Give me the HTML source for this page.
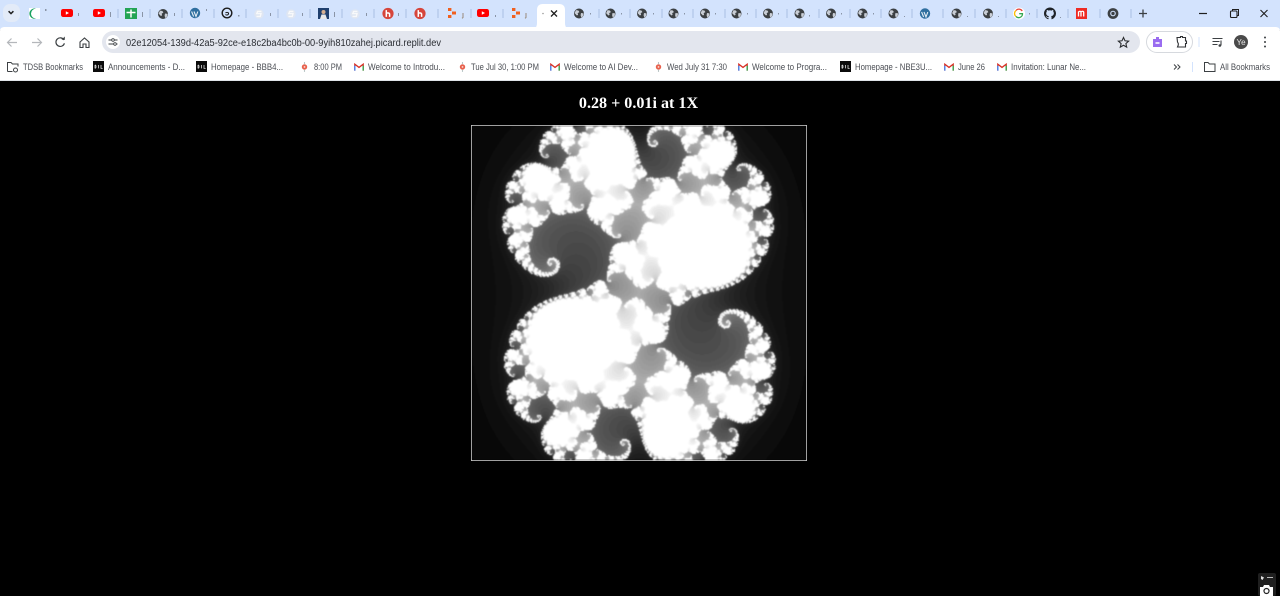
<!DOCTYPE html>
<html lang="en">
<head>
<meta charset="utf-8">
<title>0.28 + 0.01i at 1X</title>
<style>
html,body{margin:0;padding:0;background:#000;width:1280px;height:596px;overflow:hidden}
#chrome{position:absolute;left:0;top:0;filter:blur(.35px)}
#title{position:absolute;left:438.5px;width:400px;top:93px;margin:0;text-align:center;color:#fff;font:bold 16.1px/22px "Liberation Serif",serif}
#box{position:absolute;left:471px;top:125px;width:334px;height:334px;border:1px solid #c8c8c8}
canvas{display:block;width:334px;height:334px;filter:blur(.4px)}
#cam{position:absolute;left:0;top:0}
text{font-family:"Liberation Sans",sans-serif}
</style>
</head>
<body>
<svg id="chrome" width="1280" height="81" viewBox="0 0 1280 81" xmlns="http://www.w3.org/2000/svg">
<defs>
<symbol id="globe" viewBox="0 0 12 12"><circle cx="6" cy="6" r="5" fill="#3c4043"/><path d="M3 2.600l2.400.4 1 1.600-1.700 1 .4 1.800-1.200.6L1.600 5.600zM8 5.500l2.600.4-.5 2.600-1.800 1.600-.7-2.400z" fill="#c9ced6"/></symbol>
<symbol id="yt" viewBox="0 0 12 12"><rect x="0" y="2" width="12" height="8" rx="2.200" fill="#f00"/><path d="M4.800 4.200L8 6 4.800 7.800z" fill="#fff"/></symbol>
<symbol id="wp" viewBox="0 0 12 12"><circle cx="6" cy="6" r="5.200" fill="#2f6f9f"/><path d="M2.600 4.500l2 5M5 4.500l2 5 1.800-5" fill="none" stroke="#e6eef5" stroke-width="1.100"/></symbol>
<symbol id="s" viewBox="0 0 12 12"><circle cx="6" cy="6" r="4.800" fill="#dfe6f2"/><path d="M8.400 3.400H4.600L3.800 5.600H8L7.300 8.400H3.500" fill="none" stroke="#f8f9fa" stroke-width="1.400"/></symbol>
<symbol id="h" viewBox="0 0 12 12"><circle cx="6" cy="6" r="5.600" fill="#d6453b"/><path d="M4.300 2.600v6.800M4.300 6.200c1-1.200 3.300-1 3.300.6v2.600" fill="none" stroke="#fff" stroke-width="1.500"/></symbol>
<symbol id="rp" viewBox="0 0 12 12"><path d="M2 1h3.400v3H2zM6 4.500h4v3H6zM2 8h3.400v3H2z" fill="#f0601f"/></symbol>
<symbol id="d2l" viewBox="0 0 11 11"><rect width="11" height="11" fill="#0b0b0b"/><path d="M2 4v3.400M2 4c1.400 0 1.400 3.400 0 3.400M5.500 4v3.400M8 4v3.400h1.600" fill="none" stroke="#ddd" stroke-width=".8"/></symbol>
<symbol id="gm" viewBox="0 0 11 9"><path d="M.8 8.600V1.400l4.700 3.600 4.700-3.600v7.200" fill="none" stroke="#d93025" stroke-width="1.500"/><path d="M.8 8.600V3" stroke="#4285f4" stroke-width="1.500"/><path d="M10.200 8.600V3" stroke="#34a853" stroke-width="1.500"/></symbol>
<symbol id="cal" viewBox="0 0 10 12"><circle cx="5" cy="6.500" r="3" fill="#e8604c"/><path d="M5 1v2.500M5 9.500V12" stroke="#b8c4c4" stroke-width="1.200"/><circle cx="5" cy="6.500" r="1" fill="#f7d7cf"/></symbol>
<symbol id="gh" viewBox="0 0 16 16"><path fill="#1f2328" d="M8 0C3.580 0 0 3.580 0 8c0 3.540 2.290 6.530 5.470 7.590.4.070.55-.17.55-.38 0-.19-.01-.82-.01-1.490-2.010.37-2.530-.49-2.690-.94-.09-.23-.48-.94-.82-1.130-.28-.15-.68-.52-.01-.53.63-.01 1.080.58 1.230.82.72 1.210 1.870.87 2.330.66.070-.52.28-.87.51-1.070-1.780-.2-3.640-.89-3.640-3.950 0-.87.31-1.590.82-2.150-.08-.2-.36-1.020.08-2.120 0 0 .67-.21 2.200.82.64-.18 1.320-.27 2-.27.68 0 1.360.09 2 .27 1.530-1.040 2.200-.82 2.200-.82.44 1.100.16 1.920.08 2.120.51.56.82 1.270.82 2.150 0 3.070-1.870 3.750-3.650 3.950.29.25.54.73.54 1.480 0 1.070-.01 1.930-.01 2.200 0 .21.15.46.55.38A8.013 8.013 0 0016 8c0-4.420-3.580-8-8-8z"/></symbol>
</defs>

<!-- tab strip -->
<rect width="1280" height="30" fill="#d3e3fd"/>
<rect x="3" y="4" width="17" height="18" rx="7" fill="#e3ebf8"/>
<path d="M8.600 11.200l2.400 2.400 2.400-2.400" fill="none" stroke="#1f1f1f" stroke-width="1.500"/>

<rect x="29" y="8" width="11" height="11" fill="#fff"/>
<path d="M36 8.600a5.200 5.200 0 1 0 0 10 4.200 4.200 0 1 1 0-10z" fill="#1aa260"/>
<use href="#yt" x="61" y="7" width="12" height="12"/>
<use href="#yt" x="93" y="7" width="12" height="12"/>
<rect x="125" y="8" width="12" height="11" fill="#23a455"/><path d="M126.500 12.500h9M131 9.500v8" stroke="#fff" stroke-width="1.500"/>
<use href="#globe" x="157" y="8" width="12" height="12"/>
<use href="#wp" x="189" y="7" width="12" height="12"/>
<circle cx="227" cy="13" r="4.800" fill="none" stroke="#1c1c1c" stroke-width="1.400"/><path d="M225.500 13a2 2 0 0 1 3 0c.4 2-2 2.600-3 1.400" fill="none" stroke="#1c1c1c"/>
<use href="#s" x="253" y="8" width="12" height="12"/>
<use href="#s" x="285" y="8" width="12" height="12"/>
<rect x="318" y="8" width="11" height="11" fill="#20406e"/><circle cx="323.500" cy="12" r="2" fill="#d8b090"/><path d="M320 19l1.500-4.500h4L327 19z" fill="#e8e8e8"/>
<use href="#s" x="349" y="8" width="12" height="12"/>
<use href="#h" x="382" y="7.500" width="12" height="12"/>
<use href="#h" x="414" y="7.500" width="12" height="12"/>
<use href="#rp" x="446" y="7" width="12" height="12"/>
<use href="#yt" x="477" y="7" width="12" height="12"/>
<use href="#rp" x="510" y="7" width="12" height="12"/>
<!-- active tab -->
<path d="M530 30c5 0 7-3 7-7V10c0-4 2-6 6-6h16c4 0 6 2 6 6v13c0 4 2 7 7 7z" fill="#fff"/>
<path d="M551 10.500l6 6M557 10.500l-6 6" stroke="#1f1f1f" stroke-width="1.300"/>
<circle cx="543" cy="13.500" r=".8" fill="#999"/>
<!-- globes -->
<use href="#globe" x="573" y="7.500" width="12" height="12"/>
<use href="#globe" x="604.500" y="7.500" width="12" height="12"/>
<use href="#globe" x="636" y="7.500" width="12" height="12"/>
<use href="#globe" x="667.500" y="7.500" width="12" height="12"/>
<use href="#globe" x="699" y="7.500" width="12" height="12"/>
<use href="#globe" x="730.500" y="7.500" width="12" height="12"/>
<use href="#globe" x="762" y="7.500" width="12" height="12"/>
<use href="#globe" x="793.500" y="7.500" width="12" height="12"/>
<use href="#globe" x="825" y="7.500" width="12" height="12"/>
<use href="#globe" x="856.500" y="7.500" width="12" height="12"/>
<use href="#globe" x="887.500" y="7.500" width="12" height="12"/>
<use href="#wp" x="919" y="7.500" width="12" height="12"/>
<use href="#globe" x="950.500" y="7.500" width="12" height="12"/>
<use href="#globe" x="982" y="7.500" width="12" height="12"/>
<circle cx="1019" cy="13.500" r="6" fill="#fff"/>
<path d="M1022.200 11a3.800 3.800 0 0 0-6.200-.5" fill="none" stroke="#ea4335" stroke-width="1.300"/><path d="M1016 10.500a3.800 3.800 0 0 0 0 6" fill="none" stroke="#fbbc05" stroke-width="1.300"/><path d="M1016 16.500a3.800 3.800 0 0 0 6.500-2.800h-3.300" fill="none" stroke="#34a853" stroke-width="1.300"/>
<use href="#gh" x="1044" y="7.500" width="12" height="12"/>
<rect x="1076" y="8" width="11" height="11" fill="#ee2b24"/><path d="M1078.500 16.500v-5M1078.500 12c1-1 2.300-1 2.500 0v4.500M1081 12c1-1 2.500-1 2.700 0v4.500" fill="none" stroke="#fff" stroke-width="1.300"/>
<circle cx="1113" cy="13.500" r="5.400" fill="#3c4043"/><circle cx="1113" cy="13.500" r="2.800" fill="#d3e3fd"/><circle cx="1113" cy="13.500" r="1.700" fill="#3c4043"/>
<!-- separators -->
<g stroke="#a9bfe2" stroke-width="1">
<path d="M118 9v9M150 9v9M182 9v9M214 9v9M246 9v9M278 9v9M310 9v9M342 9v9M374 9v9M406 9v9M438 9v9M471 9v9M503 9v9M599 9v9M630 9v9M662 9v9M693 9v9M725 9v9M756 9v9M787 9v9M819 9v9M850 9v9M881 9v9M912 9v9M943 9v9M975 9v9M1006 9v9M1037 9v9M1068 9v9M1100 9v9M1131 9v9"/>
</g>
<g fill="#8a94a6">
<rect x="45" y="9" width="1.500" height="2"/><rect x="78" y="13" width="1" height="3"/><rect x="110" y="12" width="1" height="5"/><rect x="142" y="12" width="1" height="5"/><rect x="174" y="13" width="1" height="3"/><rect x="206" y="9" width="1" height="2"/><rect x="238" y="15" width="1.500" height="1.500"/><rect x="270" y="13" width="1" height="3"/><rect x="302" y="13" width="1" height="3"/><rect x="334" y="12" width="1" height="5"/><rect x="366" y="13" width="1" height="3"/><rect x="398" y="13" width="1" height="3"/><rect x="495" y="15" width="1" height="2"/><rect x="590" y="13" width="1" height="1.500"/><rect x="621" y="13" width="1" height="1.500"/><rect x="653" y="13" width="1" height="1.500"/><rect x="684" y="13" width="1" height="1.500"/><rect x="715" y="13" width="1" height="1.500"/><rect x="747" y="13" width="1" height="1.500"/><rect x="778" y="13" width="1" height="1.500"/><rect x="809" y="15" width="1" height="1.500"/><rect x="841" y="13" width="1" height="1.500"/><rect x="873" y="13" width="1" height="1.500"/><rect x="904" y="16" width="1" height="1"/><rect x="967" y="16" width="1" height="1"/><rect x="998" y="16" width="1" height="1"/><rect x="1029" y="13" width="1" height="1.500"/><rect x="1060" y="17" width="1" height="1"/>
</g>
<path d="M526 13v4.500l-1 .8" stroke="#9a8a7a" fill="none"/>
<path d="M463 13v4.500l-1 .8" stroke="#9a8a7a" fill="none"/>
<!-- new tab + window controls -->
<path d="M1139 13.500h8M1143 9.500v8" stroke="#3c4043" stroke-width="1.300"/>
<path d="M1199 13.500h8" stroke="#1f1f1f" stroke-width="1.200"/>
<rect x="1230.500" y="11" width="6.500" height="6.500" rx="1" fill="none" stroke="#1f1f1f" stroke-width="1.100"/><path d="M1232.500 11V9.500h6v6H1237" fill="none" stroke="#1f1f1f" stroke-width="1"/>
<path d="M1260.500 10l7 7M1267.500 10l-7 7" stroke="#1f1f1f" stroke-width="1.100"/>

<!-- toolbar -->
<path d="M0 31c0-3 2-4 5-4h1270c3 0 5 1 5 4v50H0z" fill="#fff"/>
<path d="M537 30h28v-3h-28z" fill="#fff"/>
<path d="M8 42.500h9M11.500 38.500l-4 4 4 4" fill="none" stroke="#b4b7bb" stroke-width="1.200"/>
<path d="M32 42.500h9M37.500 38.500l4 4-4 4" fill="none" stroke="#b4b7bb" stroke-width="1.200"/>
<path d="M64 40a4.300 4.300 0 1 0 .4 3.300" fill="none" stroke="#3c4043" stroke-width="1.200"/><path d="M61.500 39.800h3.300v-3.300z" fill="#3c4043"/>
<path d="M80 42l4.500-4 4.500 4v5.500h-3v-3.500h-3v3.500h-3z" fill="none" stroke="#3c4043" stroke-width="1.100"/>
<rect x="102" y="31" width="1038" height="22" rx="11" fill="#e3e6ee"/>
<circle cx="113" cy="42" r="7" fill="#fff"/>
<path d="M108.500 40h3M114.500 40h3M108.500 44h5M116.500 44h1" stroke="#3c4043" stroke-width="1.100"/><circle cx="113" cy="40" r="1.300" fill="none" stroke="#3c4043" stroke-width=".8"/><circle cx="115" cy="44" r="1.300" fill="none" stroke="#3c4043" stroke-width=".8"/>
<text x="126" y="46" font-size="10" fill="#2a2d33" textLength="315" lengthAdjust="spacingAndGlyphs">02e12054-139d-42a5-92ce-e18c2ba4bc0b-00-9yih810zahej.picard.replit.dev</text>
<path d="M1123.500 37.500l1.500 3.300 3.600.4-2.700 2.400.8 3.500-3.200-1.800-3.200 1.800.8-3.500-2.700-2.400 3.600-.4z" fill="none" stroke="#2b2d30" stroke-width="1.100"/>
<rect x="1146.500" y="31.500" width="46" height="21" rx="10.500" fill="#fff" stroke="#d6d9de"/>
<path d="M1153 39h3v-2h3v2h3v8h-9z" fill="#9a6cf0"/><rect x="1155.500" y="42" width="4" height="2" fill="#e9defc"/>
<path d="M1177 37.500h3.500v-1h2v1h3v3.500h1v2.500h-1v3.500h-8l.8-2v-1.500l-.8-1.500z" fill="none" stroke="#2f3134" stroke-width="1.100"/>
<path d="M1212.500 38.500h10M1212.500 41.500h7M1212.500 44.500h5" stroke="#3c4043" stroke-width="1.100"/><path d="M1221 40.500v5" stroke="#3c4043" stroke-width="1.100"/><circle cx="1219.800" cy="45.500" r="1.300" fill="#3c4043"/>
<circle cx="1241" cy="42" r="7" fill="#4a4a4a"/>
<text x="1241" y="45" font-size="8" fill="#e8e8e8" text-anchor="middle">Ye</text>
<circle cx="1265" cy="37.500" r="1" fill="#3c4043"/><circle cx="1265" cy="42" r="1" fill="#3c4043"/><circle cx="1265" cy="46.500" r="1" fill="#3c4043"/>
<path d="M1199 37v10" stroke="#d3e3fd" stroke-width="1"/>

<!-- bookmarks -->
<g fill="#4c4f55" font-size="9">
<text x="23" y="70" textLength="60" lengthAdjust="spacingAndGlyphs">TDSB Bookmarks</text>
<text x="108" y="70" textLength="77" lengthAdjust="spacingAndGlyphs">Announcements - D...</text>
<text x="211" y="70" textLength="72" lengthAdjust="spacingAndGlyphs">Homepage - BBB4...</text>
<text x="314" y="70" textLength="28" lengthAdjust="spacingAndGlyphs">8:00 PM</text>
<text x="368" y="70" textLength="77" lengthAdjust="spacingAndGlyphs">Welcome to Introdu...</text>
<text x="471" y="70" textLength="68" lengthAdjust="spacingAndGlyphs">Tue Jul 30, 1:00 PM</text>
<text x="564" y="70" textLength="74" lengthAdjust="spacingAndGlyphs">Welcome to AI Dev...</text>
<text x="667" y="70" textLength="60" lengthAdjust="spacingAndGlyphs">Wed July 31 7:30</text>
<text x="752" y="70" textLength="75" lengthAdjust="spacingAndGlyphs">Welcome to Progra...</text>
<text x="855" y="70" textLength="77" lengthAdjust="spacingAndGlyphs">Homepage - NBE3U...</text>
<text x="958" y="70" textLength="27" lengthAdjust="spacingAndGlyphs">June 26</text>
<text x="1011" y="70" textLength="75" lengthAdjust="spacingAndGlyphs">Invitation: Lunar Ne...</text>
<text x="1220" y="70" textLength="50" lengthAdjust="spacingAndGlyphs">All Bookmarks</text>
</g>
<path d="M7.500 71.500v-9h3.500l1.500 1.500h5.500v2.500M7.500 71.500h5" fill="none" stroke="#3c4043" stroke-width="1"/><circle cx="15.500" cy="70" r="2" fill="none" stroke="#3c4043" stroke-width="1"/>
<use href="#d2l" x="93" y="61" width="11" height="11"/>
<use href="#d2l" x="196" y="61" width="11" height="11"/>
<use href="#d2l" x="840" y="61" width="11" height="11"/>
<use href="#cal" x="300" y="61" width="9" height="11"/>
<use href="#cal" x="458" y="61" width="9" height="11"/>
<use href="#cal" x="654" y="61" width="9" height="11"/>
<use href="#gm" x="354" y="63" width="10" height="8"/>
<use href="#gm" x="550" y="63" width="10" height="8"/>
<use href="#gm" x="738" y="63" width="10" height="8"/>
<use href="#gm" x="944" y="63" width="10" height="8"/>
<use href="#gm" x="997" y="63" width="10" height="8"/>
<path d="M1174 64.500l2.500 2.500-2.500 2.500M1177.500 64.500l2.500 2.500-2.500 2.500" fill="none" stroke="#3c4043" stroke-width="1"/>
<path d="M1192.500 62v10" stroke="#d3e3fd"/>
<path d="M1204.500 71.500v-9h3.500l1.500 1.500h5.500v7.500z" fill="none" stroke="#3c4043" stroke-width="1"/>
<rect x="0" y="80" width="1280" height="1" fill="#dfe3e8"/>
</svg>

<h2 id="title">0.28 + 0.01i at 1X</h2>
<div id="box"><canvas id="c" width="334" height="334"></canvas></div>

<svg id="cam" width="1280" height="596" viewBox="0 0 1280 596" style="pointer-events:none">
<rect x="1258" y="573" width="18" height="23" rx="2" fill="#1f1f1f"/>
<path d="M1261 576l3 1.500-1.500 2.500-1.500-1z" fill="#ddd"/><rect x="1267" y="577" width="6" height="1" fill="#bbb"/>
<path d="M1260 596v-9h3l1-2h5l1 2h3v9z" fill="#fff"/><circle cx="1266.500" cy="591" r="2.500" fill="none" stroke="#222" stroke-width="1.200"/>
</svg>

<script>
(function(){
var c=document.getElementById('c'),g=c.getContext('2d'),W=334,H=334,im=g.createImageData(W,H),d=im.data;
var cr=0.28,ci=0.01,MAX=255;
for(var py=0;py<H;py++){for(var px=0;px<W;px++){
 var x=(px+.5)/W*2-1,y=1-(py+.5)/H*2,n=0;
 while(n<MAX&&x*x+y*y<=4){var t=x*x-y*y+cr;y=2*x*y+ci;x=t;n++;}
 var v=Math.min(255,n*4.25),i=(py*W+px)*4;
 d[i]=d[i+1]=d[i+2]=v;d[i+3]=255;
}}
g.putImageData(im,0,0);
})();
</script>
</body>
</html>
